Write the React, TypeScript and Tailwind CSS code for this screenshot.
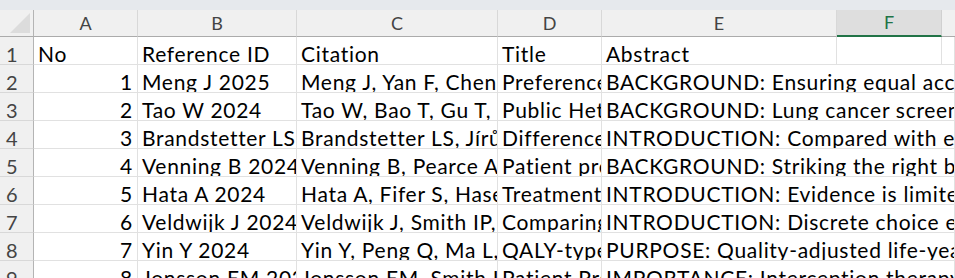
import type { FC } from 'react';

const rows = [
  { no: 1, ref: 'Meng J 2025', cite: 'Meng J, Yan F, Chen Y, Li X, Wang H. Preferences for', title: 'Preferences for lung cancer screening', abs: 'BACKGROUND: Ensuring equal access to lung cancer screening' },
  { no: 2, ref: 'Tao W 2024', cite: 'Tao W, Bao T, Gu T, Li Y, Zhang M, et al.', title: 'Public Heterogeneous Preferences', abs: 'BACKGROUND: Lung cancer screening programs' },
  { no: 3, ref: 'Brandstetter LS 2024', cite: 'Brandstetter LS, Jírů-Hillmann S, Weinmann S', title: 'Differences in preferences', abs: 'INTRODUCTION: Compared with earlier detection' },
  { no: 4, ref: 'Venning B 2024', cite: 'Venning B, Pearce A, Norris S, De Abreu Lourenco R', title: 'Patient preferences', abs: 'BACKGROUND: Striking the right balance between' },
  { no: 5, ref: 'Hata A 2024', cite: 'Hata A, Fifer S, Hasegawa K, Ordman R', title: 'Treatment preferences', abs: 'INTRODUCTION: Evidence is limited regarding' },
  { no: 6, ref: 'Veldwijk J 2024', cite: 'Veldwijk J, Smith IP, Oliveri S, Petrocchi S', title: 'Comparing discrete choice', abs: 'INTRODUCTION: Discrete choice experiments' },
  { no: 7, ref: 'Yin Y 2024', cite: 'Yin Y, Peng Q, Ma L, Wang Y, Xu H', title: 'QALY-type preference', abs: 'PURPOSE: Quality-adjusted life-years' },
  { no: 8, ref: 'Jonsson EM 2024', cite: 'Jonsson EM, Smith IP, Veldwijk J', title: 'Patient Preferences', abs: 'IMPORTANCE: Interception therapy' },
];

const cols = ['A', 'B', 'C', 'D', 'E', 'F'];

const cell = 'h-[28px] border-b border-r border-[#e1e1e1] flex items-end leading-[20px] overflow-hidden whitespace-nowrap px-[4px]';

const RowHead: FC<{ n: number }> = ({ n }) => (
  <div className="h-[28px] border-b border-r border-b-[#d8d8d8] border-r-[#b4b4b4] bg-[#f0f0f0] flex items-end leading-[20px] pl-[6px] text-[#444] text-[20px] tracking-normal">
    {n}
  </div>
);

export default function App() {
  return (
    <div
      className="w-[955px] h-[278px] overflow-hidden bg-white text-black text-[21px] tracking-[0.7px]"
      style={{ fontFamily: 'Lato, "Noto Sans CJK JP", sans-serif' }}
    >
      <div className="h-[10px] bg-[#e6e9ed]" />
      <div className="grid grid-cols-[34px_104px_159px_201px_104px_235px_105px_1fr]">
        {/* corner */}
        <div className="h-[27px] bg-[#f0f0f0] border-r border-b border-r-[#b4b4b4] border-b-[#ababab] flex items-end justify-end pr-[3px] pb-[3px]">
          <svg width="20" height="20" viewBox="0 0 20 20">
            <polygon points="20,0 20,20 0,20" fill="#dcdcdc" />
          </svg>
        </div>
        {cols.map((c) =>
          c === 'F' ? (
            <div key={c} className="h-[27px] bg-[#dedede] border-r border-r-[#d0d0d0] border-b-2 border-b-[#217346] flex items-center justify-center text-[18px] text-[#217346] tracking-normal">
              {c}
            </div>
          ) : (
            <div key={c} className="h-[27px] bg-[#f0f0f0] border-r border-r-[#d8d8d8] border-b border-b-[#ababab] flex items-center justify-center text-[18px] text-[#444] tracking-normal">
              {c}
            </div>
          )
        )}
        <div className="h-[27px] bg-[#f0f0f0] border-b border-b-[#ababab]" />

        {/* header row */}
        <RowHead n={1} />
        <div className={cell}>No</div>
        <div className={cell}>Reference ID</div>
        <div className={cell}>Citation</div>
        <div className={cell}>Title</div>
        <div className={cell}>Abstract</div>
        <div className={cell} />
        <div className={cell} />

        {rows.map((r, i) => (
          <div key={r.no} className="contents">
            <RowHead n={i + 2} />
            <div className={`${cell} justify-end`}>{r.no}</div>
            <div className={cell}>{r.ref}</div>
            <div className={cell}>{r.cite}</div>
            <div className={cell}>{r.title}</div>
            <div className={`${cell} col-span-3`}>{r.abs}</div>
          </div>
        ))}
      </div>
    </div>
  );
}
